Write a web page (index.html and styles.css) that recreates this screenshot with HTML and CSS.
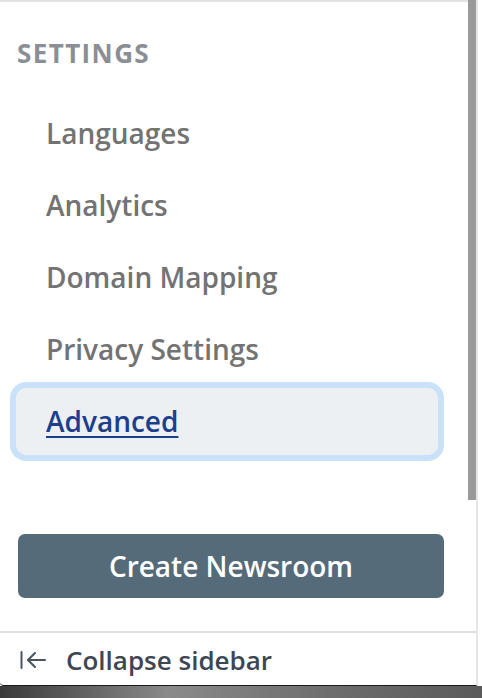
FILE: index.html
```html
<!DOCTYPE html>
<html lang="en">
<head>
<meta charset="utf-8">
<title>Settings sidebar</title>
<link rel="stylesheet" href="styles.css">
</head>
<body>
<div class="window">
  <div class="panel">
    <div class="scroll-area">
      <div class="content">
        <h2 class="heading">SETTINGS</h2>
        <nav class="nav">
          <a class="nav-item" href="#">Languages</a>
          <a class="nav-item" href="#">Analytics</a>
          <a class="nav-item" href="#">Domain Mapping</a>
          <a class="nav-item" href="#">Privacy Settings</a>
          <a class="nav-item active" href="#">Advanced</a>
        </nav>
        <button class="create-btn" type="button">Create Newsroom</button>
      </div>
      <div class="scroll-track"><div class="scroll-thumb"></div></div>
    </div>
    <div class="footer">
      <svg class="collapse-icon" width="26" height="20" viewBox="0 0 26 20" fill="none" stroke="#4a5260" stroke-width="2" stroke-linecap="round" stroke-linejoin="round">
        <line x1="1.5" y1="2" x2="1.5" y2="18"/>
        <line x1="8" y1="10" x2="25" y2="10"/>
        <polyline points="15,3 8,10 15,17"/>
      </svg>
      <span class="collapse-label">Collapse sidebar</span>
    </div>
  </div>
  <div class="shadow"></div>
</div>
</body>
</html>
```
FILE: styles.css
```css
* { box-sizing: border-box; }
html, body { margin: 0; padding: 0; background: #fff; }
body { font-family: "Open Sans", "Noto Sans", sans-serif; width: 482px; height: 698px; overflow: hidden; }

.window { display: flex; flex-direction: column; height: 698px; }

.panel {
  width: 478px;
  height: 686px;
  display: flex;
  flex-direction: column;
  border-right: 2px solid #e6e6e6;
  border-bottom: 1px solid #1a1a1a;
  border-bottom-left-radius: 4px;
  background: #fff;
}

.scroll-area { display: flex; height: 631px; }

.content {
  width: 468px;
  border-top: 2px solid #e2e2e2;
  padding: 33px 0 0 16px;
  display: flex;
  flex-direction: column;
}

.heading {
  margin: 0 0 29px 1px;
  font-size: 26px;
  line-height: 36px;
  font-weight: 700;
  letter-spacing: 1.4px;
  color: #8b8e95;
}

.nav { display: flex; flex-direction: column; gap: 5px; width: 422px; }

.nav-item {
  display: block;
  padding: 13px 30px 14px;
  font-size: 28px;
  line-height: 40px;
  font-weight: 600;
  color: #737373;
  text-decoration: none;
  border-radius: 10px;
}

.nav-item.active {
  background: #edf0f3;
  color: #1c3f8d;
  text-decoration: underline;
  text-decoration-thickness: 2px;
  text-underline-offset: 4px;
  box-shadow: 0 0 0 6px #c9e2f9;
}

.create-btn {
  margin: 79px 0 0 2px;
  width: 426px;
  height: 64px;
  padding: 12px 0;
  border: 0;
  border-radius: 7px;
  background: #566b79;
  color: #fff;
  font-family: inherit;
  font-size: 28px;
  line-height: 40px;
  font-weight: 600;
}

.scroll-track { width: 8px; }
.scroll-thumb { height: 500px; background: #9a9a9a; }

.footer {
  border-top: 2px solid #e0e0e0;
  display: flex;
  align-items: center;
  gap: 20px;
  padding: 9px 0 7px 20px;
  height: 54px;
}

.collapse-icon { flex: none; }

.collapse-label {
  font-size: 26px;
  line-height: 36px;
  font-weight: 600;
  color: #3e4653;
}

.shadow {
  height: 12px;
  background: linear-gradient(to right, #3a3a3a 0%, #8a8a8a 35%, #6c6c6c 70%, #5a5a5a 100%);
}
```
